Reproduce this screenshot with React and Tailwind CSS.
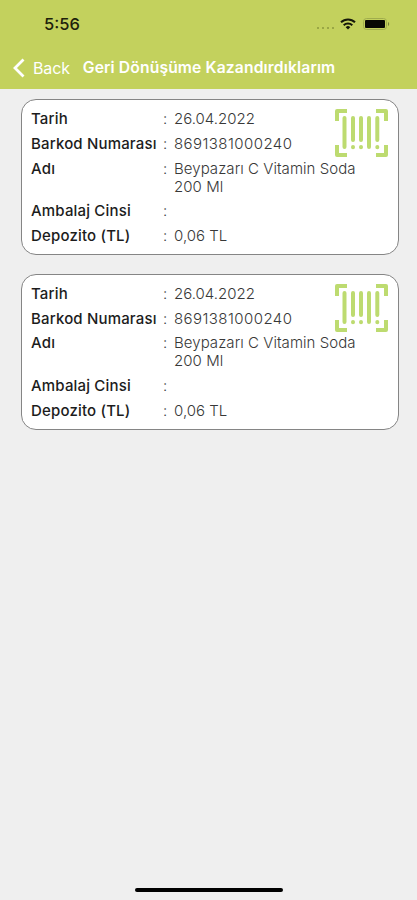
import React from "react";

const records = [
  { id: 1, date: "26.04.2022", barcode: "8691381000240", name: "Beypazarı C Vitamin Soda 200 Ml", packaging: "", deposit: "0,06 TL" },
  { id: 2, date: "26.04.2022", barcode: "8691381000240", name: "Beypazarı C Vitamin Soda 200 Ml", packaging: "", deposit: "0,06 TL" },
];

const BarcodeIcon = () => (
  <svg width="54" height="50" viewBox="0 0 54 50" fill="none" stroke="#bddb70" className="shrink-0">
    {/* Corners */}
    <path
      d="M3 13V3h10M42 3h10v10M52 37v10H42M13 47H3V37"
      strokeWidth="4"
      strokeLinejoin="round"
    />
    {/* Bars */}
    <path
      d="M10.5 10v29M19 10v22M27 10v22M35 10v29M43.3 10v22M19 39v.2M27 39v.2M43.3 39v.2"
      strokeWidth="4"
      strokeLinecap="round"
    />
  </svg>
);

const StatusBar = () => (
  <div className="flex h-[47px] items-center justify-between pl-[44px] pr-[27px]">
    <span className="mt-px text-[16.5px] font-medium text-[#1d210b]">5:56</span>
    <div className="flex items-center">
      <div className="mr-[6px] mt-[9px] flex gap-[3px]">
        <span className="size-[2px] rounded-full bg-[#8c983e]" />
        <span className="size-[2px] rounded-full bg-[#8c983e]" />
        <span className="size-[2px] rounded-full bg-[#8c983e]" />
        <span className="size-[2px] rounded-full bg-[#8c983e]" />
      </div>
      <svg width="16" height="12" viewBox="0 0 16 12" fill="none" stroke="#15180a" strokeWidth="2">
        <path d="M1 4.3a10 10 0 0 1 14 0M3.7 7.2a6.2 6.2 0 0 1 8.6 0" />
        <path d="M8 11.5 5.7 9.2a3.3 3.3 0 0 1 4.6 0Z" fill="#15180a" stroke="none" />
      </svg>
      <svg width="27" height="12" viewBox="0 0 27 12" className="ml-[7px]">
        <rect x="0.5" y="0.5" width="23" height="11" rx="3" fill="none" stroke="#a0ad4d" />
        <rect x="2" y="2" width="20" height="8" rx="1" fill="#080904" />
        <path d="M25 4v4c1.6-.6 1.6-3.4 0-4Z" fill="#78833a" />
      </svg>
    </div>
  </div>
);

const Row = ({ label, value, valueClass = "" }) => (
  <div className="flex text-[15px] leading-[18.2px]">
    <dt className="w-[132px] shrink-0 whitespace-nowrap font-medium tracking-[0.17px] text-[#1c1c1c]">{label}</dt>
    <dd className="flex font-light text-[#383838]">
      <span className="w-[11px] shrink-0">:</span>
      <span className={`w-[190px] ${valueClass}`}>{value}</span>
    </dd>
  </div>
);

const RecordCard = ({ record }) => (
  <article className="relative h-[156px] rounded-[15px] border border-[#858585] bg-white pl-[9px] pt-[10.4px]">
    <dl className="flex flex-col gap-[6.4px]">
      <Row label="Tarih" value={record.date} />
      <Row label="Barkod Numarası" value={record.barcode} valueClass="tracking-[0.43px]" />
      <Row label="Adı" value={record.name} valueClass="tracking-[0.05px]" />
      <Row label="Ambalaj Cinsi" value={record.packaging} />
      <Row label="Depozito (TL)" value={record.deposit} />
    </dl>
    <div className="absolute right-[10px] top-[8px]">
      <BarcodeIcon />
    </div>
  </article>
);

const App = () => {
  return (
    <div className="flex h-[900px] w-[417px] flex-col overflow-hidden bg-[#efefef] font-['Inter','Liberation_Sans',sans-serif]">
      <header className="h-[89px] shrink-0 bg-[#c3d15d]">
        <StatusBar />
        <nav className="flex h-[42px] items-center pl-[13px] text-white">
          <svg width="12" height="20" viewBox="0 0 12 20" fill="none" stroke="currentColor" strokeWidth="2.8">
            <path d="M10.5 1.5 2 10l8.5 8.5" />
          </svg>
          <button className="ml-[8px] text-[16px] tracking-[-0.15px]">Back</button>
          <h1 className="ml-[13px] whitespace-nowrap text-[15.7px] font-semibold tracking-[0.12px]">
            Geri Dönüşüme Kazandırdıklarım
          </h1>
        </nav>
      </header>

      <main className="flex flex-1 flex-col gap-[18.6px] pl-[21px] pr-[18px] pt-[10px]">
        {records.map((record) => (
          <RecordCard key={record.id} record={record} />
        ))}
      </main>

      {/* Home indicator */}
      <div className="mb-[8px] ml-[135px] h-[4px] w-[148px] shrink-0 rounded-full bg-black" />
    </div>
  );
};

export default App;
